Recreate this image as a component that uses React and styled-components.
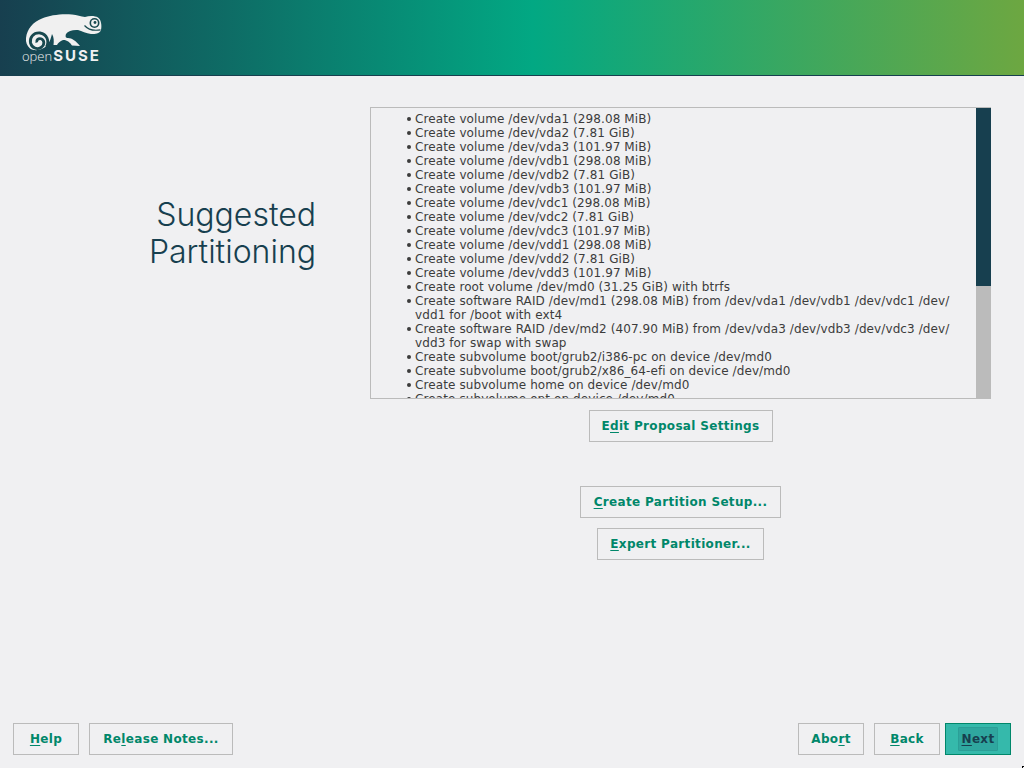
import React from 'react';
import styled, { createGlobalStyle } from 'styled-components';

const GlobalStyle = createGlobalStyle`
  html, body {
    margin: 0;
    padding: 0;
    background: #f0f0f2;
  }
`;

const Page = styled.div`
  position: relative;
  width: 1024px;
  height: 768px;
  display: flex;
  flex-direction: column;
  overflow: hidden;
  background: #f0f0f2;
  font-family: "DejaVu Sans", sans-serif;
`;

const Header = styled.header`
  height: 75px;
  flex: none;
  display: flex;
  border-bottom: 1px solid #173f4f;
  background: linear-gradient(to right, #173f4f 0%, #02a883 52%, #6da741 100%);
`;

const Logo = styled.div`
  position: relative;
  width: 90px;
  margin-left: 20px;
  color: #f0f0f0;
`;

const LogoArt = styled.svg`
  display: block;
  width: 90px;
  height: 48px;
  margin-top: 8px;
`;

const Wordmark = styled.div`
  position: absolute;
  left: 2px;
  top: 46px;
  white-space: nowrap;
  display: flex;
  align-items: baseline;
`;

const WordOpen = styled.span`
  font: 300 13px "Open Sans", sans-serif;
  margin-right: 1px;
`;

const WordSuse = styled.span`
  font: 700 15px Inter, sans-serif;
  letter-spacing: 2px;
`;

const Main = styled.main`
  flex: 1;
  display: flex;
`;

const TitleColumn = styled.div`
  width: 316px;
  padding-top: 120px;
  flex: none;
`;

const Title = styled.h1`
  margin: 0;
  font: 300 32px/37px Inter, sans-serif;
  color: #173f4f;
  text-align: right;
`;

const Content = styled.div`
  width: 621px;
  margin-left: 54px;
  padding-top: 31px;
  display: flex;
  flex-direction: column;
  align-items: center;
`;

const LogBox = styled.div`
  width: 100%;
  height: 292px;
  box-sizing: border-box;
  display: flex;
  border: 1px solid #bbbbbb;
  border-right: none;
  overflow: hidden;
`;

const LogList = styled.ul`
  flex: 1;
  margin: 0;
  padding: 4px 24px 0 44px;
  list-style: none;
  font-size: 12px;
  line-height: 14px;
  letter-spacing: 0.1px;
  color: #3c3c3c;
  overflow: hidden;
`;

const LogItem = styled.li`
  position: relative;
  &::before {
    content: '';
    position: absolute;
    left: -8px;
    top: 5px;
    width: 4px;
    height: 4px;
    border-radius: 50%;
    background: #3c3c3c;
  }
`;

const ScrollTrack = styled.div`
  width: 15px;
  flex: none;
  background: #bbbbbb;
`;

const ScrollThumb = styled.div`
  height: 178px;
  background: #173f4f;
`;

const Button = styled.button`
  height: 32px;
  width: ${({ $width }) => $width || 66}px;
  box-sizing: border-box;
  padding: 0 0 1px;
  border: 1px solid ${({ $primary }) => ($primary ? '#00876a' : '#bbbbbb')};
  border-radius: 0;
  background: ${({ $primary }) => ($primary ? '#35b9ab' : 'transparent')};
  color: ${({ $primary }) => ($primary ? '#173f4f' : '#00876a')};
  font: 700 12px "DejaVu Sans", sans-serif;
  letter-spacing: 0.33px;
  white-space: nowrap;
  flex: none;
  u {
    text-underline-offset: 2px;
  }
`;

const NextButton = styled(Button)`
  padding: 0;
`;

const EditButton = styled(Button)`
  margin-top: 11px;
`;

const CreateButton = styled(Button)`
  margin-top: 44px;
`;

const ExpertButton = styled(Button)`
  margin-top: 10px;
`;

const FocusBox = styled.span`
  display: block;
  width: 40px;
  height: 24px;
  margin: 0 auto;
  box-sizing: border-box;
  border: 1px solid #2b9f97;
  border-radius: 1px;
  background: #2fa79f;
  line-height: 22px;
  text-align: center;
`;

const Footer = styled.footer`
  flex: none;
  display: flex;
  padding: 0 13px 13px;
`;

const FooterGroup = styled.div`
  display: flex;
  gap: 10px;
`;

const FooterSpacer = styled.div`
  flex: 1;
`;

const RightButtons = styled.div`
  display: flex;
  gap: 5px;
`;

const CursorTip = styled.div`
  position: absolute;
  right: 0;
  bottom: 0;
  width: 1px;
  height: 1px;
  border-top: 1px solid #000;
  border-left: 1px solid #000;
`;

const items = [
  'Create volume /dev/vda1 (298.08 MiB)',
  'Create volume /dev/vda2 (7.81 GiB)',
  'Create volume /dev/vda3 (101.97 MiB)',
  'Create volume /dev/vdb1 (298.08 MiB)',
  'Create volume /dev/vdb2 (7.81 GiB)',
  'Create volume /dev/vdb3 (101.97 MiB)',
  'Create volume /dev/vdc1 (298.08 MiB)',
  'Create volume /dev/vdc2 (7.81 GiB)',
  'Create volume /dev/vdc3 (101.97 MiB)',
  'Create volume /dev/vdd1 (298.08 MiB)',
  'Create volume /dev/vdd2 (7.81 GiB)',
  'Create volume /dev/vdd3 (101.97 MiB)',
  'Create root volume /dev/md0 (31.25 GiB) with btrfs',
  'Create software RAID /dev/md1 (298.08 MiB) from /dev/vda1 /dev/vdb1 /dev/vdc1 /dev/\u200bvdd1 for /boot with ext4',
  'Create software RAID /dev/md2 (407.90 MiB) from /dev/vda3 /dev/vdb3 /dev/vdc3 /dev/\u200bvdd3 for swap with swap',
  'Create subvolume boot/grub2/i386-pc on device /dev/md0',
  'Create subvolume boot/grub2/x86_64-efi on device /dev/md0',
  'Create subvolume home on device /dev/md0',
  'Create subvolume opt on device /dev/md0',
];

// viewBox is in page pixels so the points line up with the screenshot
const OpenSuseLogo = () => (
  <Logo>
    <LogoArt viewBox="20 8 90 48">
      <path
        fill="currentColor"
        d="M26 38 C27 29 33 22 42 18.5 C50 15 62 13.5 72 14.5 C77 15 81 16.5 85 17 C89 15.5 95 15.5 98 17.5 C101 19.5 102 25 101 30 C100 33 96 34.5 91 34 C86 33.5 82 31 78 30 C73 29.5 68 31 66 34 C65 37 66 38 68 38 C72 38 76 41 80 46 L72 45.5 C70 42 66 39.5 63 40 C60 41 58 43 57 45 L53.5 45 C54 41 54 37 52 34 C51 38 50 41 48 44 C44 50 35 52 30 48.5 C27 46 25.5 42 26 38 Z"
      />
      <path
        d="M46.5 47 C49.5 41 47 34 40 33 C33 32.5 29.5 38 30.5 43 C32 48 37 50 41 47.5 C45 45 44.5 40 41 38.8 C38.5 38 36 40 36.8 42.5"
        fill="none"
        stroke="#18494f"
        strokeWidth="2.8"
      />
      <circle cx="94.5" cy="23" r="5" fill="#18494f" />
      <circle cx="94.5" cy="23" r="3.4" fill="#f0f0f0" />
      <circle cx="95" cy="22.5" r="1.4" fill="#18494f" />
      <path d="M84.5 25.5 C88 29.5 94 31 100.5 29.8" fill="none" stroke="#18494f" strokeWidth="1.2" />
    </LogoArt>
    <Wordmark>
      <WordOpen>open</WordOpen>
      <WordSuse>SUSE</WordSuse>
    </Wordmark>
  </Logo>
);

const App = () => (
  <>
    <GlobalStyle />
    <Page>
      <Header>
        <OpenSuseLogo />
      </Header>
      <Main>
        <TitleColumn>
          <Title>
            Suggested
            <br />
            Partitioning
          </Title>
        </TitleColumn>
        <Content>
          <LogBox>
            <LogList>
              {items.map((item) => (
                <LogItem key={item}>{item}</LogItem>
              ))}
            </LogList>
            <ScrollTrack>
              <ScrollThumb />
            </ScrollTrack>
          </LogBox>
          <EditButton $width={184}>
            E<u>d</u>it Proposal Settings
          </EditButton>
          <CreateButton $width={201}>
            <u>C</u>reate Partition Setup...
          </CreateButton>
          <ExpertButton $width={167}>
            <u>E</u>xpert Partitioner...
          </ExpertButton>
        </Content>
      </Main>
      <Footer>
        <FooterGroup>
          <Button>
            <u>H</u>elp
          </Button>
          <Button $width={144}>
            Re<u>l</u>ease Notes...
          </Button>
        </FooterGroup>
        <FooterSpacer />
        <FooterGroup>
          <Button>
            Abo<u>r</u>t
          </Button>
          <RightButtons>
            <Button>
              <u>B</u>ack
            </Button>
            <NextButton $primary>
              <FocusBox>
                <u>N</u>ext
              </FocusBox>
            </NextButton>
          </RightButtons>
        </FooterGroup>
      </Footer>
      <CursorTip />
    </Page>
  </>
);

export default App;
